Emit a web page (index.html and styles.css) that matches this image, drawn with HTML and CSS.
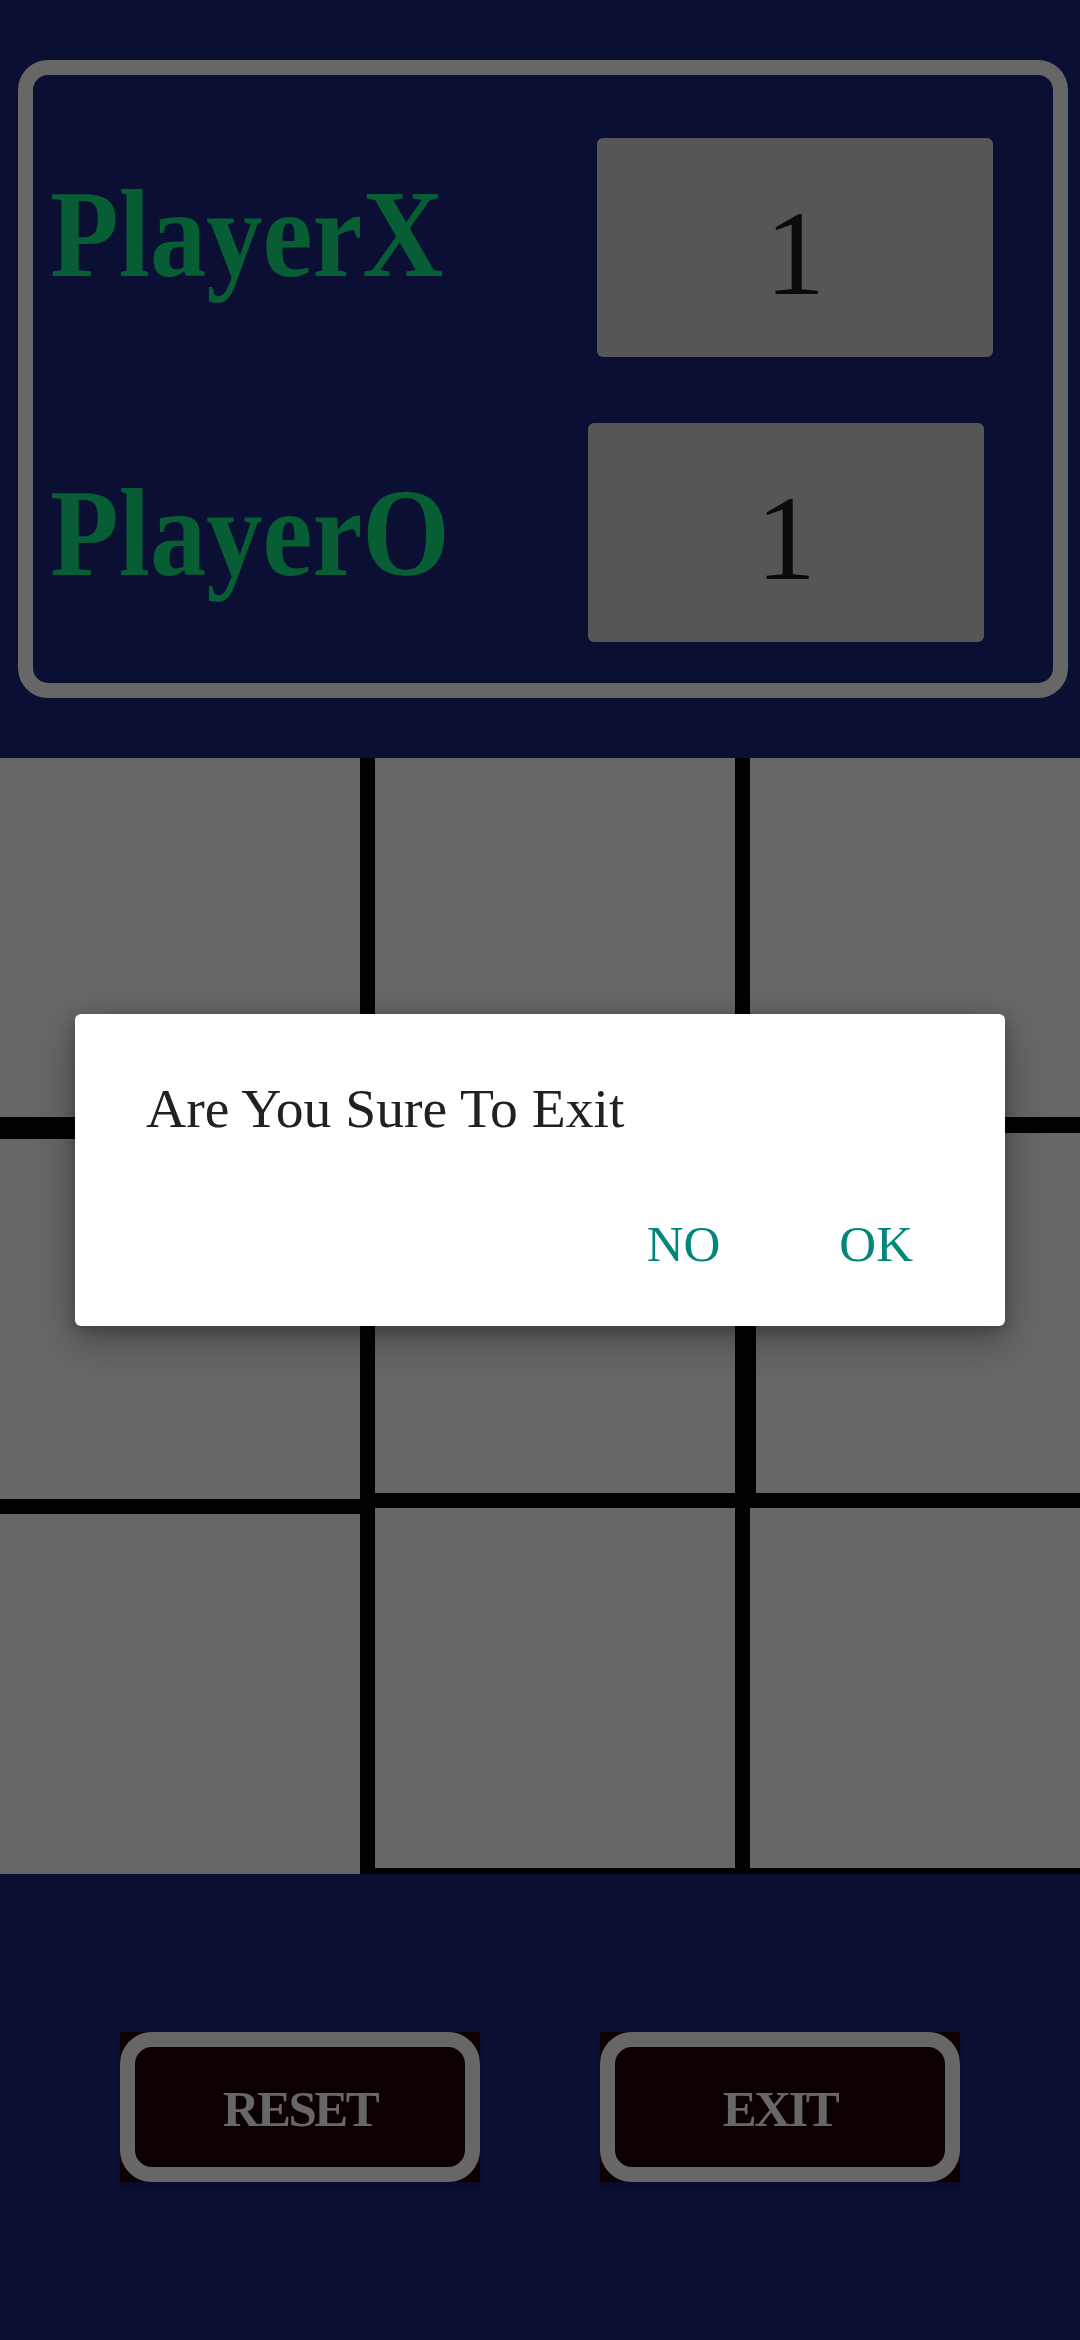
FILE: index.html
```html
<!DOCTYPE html>
<html>
<head>
<meta charset="utf-8">
<link rel="stylesheet" href="styles.css">
</head>
<body>
<div class="screen">
  <div class="panel">
    <div class="score-row">
      <div class="label label-x">PlayerX</div>
      <div class="score score-x">1</div>
    </div>
    <div class="score-row row-o">
      <div class="label label-o">PlayerO</div>
      <div class="score score-o">1</div>
    </div>
  </div>

  <div class="board">
    <div class="col col-a">
      <div class="cell r1"></div>
      <div class="cell a2"></div>
      <div class="cell a3"></div>
    </div>
    <div class="col col-b">
      <div class="cell r1"></div>
      <div class="cell b2"></div>
      <div class="cell b3"></div>
    </div>
    <div class="col col-c">
      <div class="cell r1 c-narrow"></div>
      <div class="cell b2 c-wide"></div>
      <div class="cell b3 c-narrow"></div>
    </div>
  </div>

  <div class="actions">
    <div class="btn"><div class="btn-frame">RESET</div></div>
    <div class="btn"><div class="btn-frame">EXIT</div></div>
  </div>
</div>

<div class="dialog">
  <div class="dialog-title">Are You Sure To Exit</div>
  <div class="dialog-buttons">
    <span class="dialog-btn">NO</span>
    <span class="dialog-btn">OK</span>
  </div>
</div>
</body>
</html>
```

FILE: styles.css
```css
html, body {
  margin: 0;
  padding: 0;
}
body {
  width: 1080px;
  height: 2340px;
  background: #0a0f33;
  font-family: "Liberation Serif", "Times New Roman", serif;
  overflow: hidden;
}
.screen {
  padding-top: 60px;
}
.panel {
  margin: 0 12px 0 18px;
  border: 15px solid #676767;
  border-radius: 30px;
  padding: 63px 0 41px 17px;
}
.score-row {
  display: flex;
  height: 219px;
}
.row-o {
  margin-top: 66px;
}
.label {
  font-weight: bold;
  font-size: 125px;
  line-height: 125px;
  color: #085e34;
  white-space: nowrap;
  transform: scaleX(0.9);
  transform-origin: left center;
}
.label-x { margin-top: 34px; }
.label-o { margin-top: 48px; }
.score {
  margin-left: auto;
  width: 396px;
  height: 219px;
  box-sizing: border-box;
  background: #565656;
  border-radius: 6px;
  text-align: center;
  font-size: 120px;
  line-height: 120px;
  padding-top: 56px;
  color: #0b0b0b;
}
.score-x { margin-right: 60px; }
.score-o { margin-right: 69px; }

.board {
  margin-top: 60px;
  height: 1116px;
  background: #000;
  display: flex;
}
.col {
  display: flex;
  flex-direction: column;
}
.col-a { width: 360px; }
.col-b { width: 360px; margin-left: 15px; }
.col-c { flex: 1; }
.cell {
  background: #676767;
  height: 360px;
}
.r1 { height: 359px; }
.a2 { margin-top: 22px; }
.a3 { margin-top: 15px; }
.b2 { margin-top: 16px; }
.b3 { margin-top: 15px; }
.c-narrow { margin-left: 15px; }
.c-wide { margin-left: 21px; }

.actions {
  margin-top: 158px;
  display: flex;
  padding-left: 120px;
  gap: 120px;
}
.btn {
  width: 360px;
  height: 150px;
  background: #0d0000;
  box-shadow: 0 4px 6px rgba(0, 0, 0, 0.25);
}
.btn-frame {
  height: 100%;
  box-sizing: border-box;
  border: 15px solid #676767;
  border-radius: 32px;
  display: flex;
  align-items: center;
  justify-content: center;
  font-weight: bold;
  font-size: 51px;
  line-height: 51px;
  letter-spacing: -2.5px;
  color: #676767;
  padding-top: 4px;
}

.dialog {
  position: absolute;
  left: 75px;
  top: 1014px;
  width: 930px;
  height: 312px;
  box-sizing: border-box;
  background: #ffffff;
  border-radius: 6px;
  box-shadow: 0 14px 40px rgba(0, 0, 0, 0.32), 0 4px 14px rgba(0, 0, 0, 0.22);
  padding: 67px 92px 0 71px;
}
.dialog-title {
  font-size: 55.6px;
  line-height: 55.6px;
  color: #212121;
  white-space: nowrap;
}
.dialog-buttons {
  margin-top: 82px;
  display: flex;
  justify-content: flex-end;
  gap: 119px;
}
.dialog-btn {
  font-size: 51px;
  line-height: 51px;
  color: #00877a;
}
```
